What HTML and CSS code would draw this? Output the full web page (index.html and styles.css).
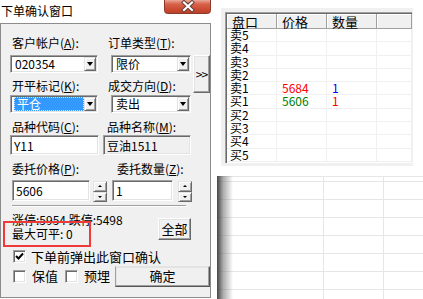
FILE: index.html
```html
<!DOCTYPE html>
<html lang="zh-CN">
<head>
  <meta charset="UTF-8">
  <title>下单确认窗口</title>
  <link rel="stylesheet" href="styles.css">
</head>
<body>

<div class="dialog">
  <div class="titlebar">
    <span class="title">下单确认窗口</span>
    <span class="close">
      <svg width="47" height="14" viewBox="0 0 47 14">
        <defs>
          <linearGradient id="cg" x1="0" y1="0" x2="0" y2="1">
            <stop offset="0" stop-color="#eaa898"/>
            <stop offset="0.3" stop-color="#d8624b"/>
            <stop offset="0.75" stop-color="#c9472f"/>
            <stop offset="1" stop-color="#b8412c"/>
          </linearGradient>
        </defs>
        <path d="M0.5 0 V10.5 Q0.5 13.5 3.5 13.5 H43.5 Q46.5 13.5 46.5 10.5 V0" fill="url(#cg)" stroke="#8b3a2c"/>
        <path d="M20 2.5 L28 10 M28 2.5 L20 10" stroke="#5a3a36" stroke-width="4" stroke-linecap="square"/>
        <path d="M20 2.5 L28 10 M28 2.5 L20 10" stroke="#fff" stroke-width="2.2" stroke-linecap="square"/>
      </svg>
    </span>
  </div>

  <div class="panel">
    <div class="top">
      <div class="top-grid">
        <label class="lbl">客户帐户(<u>A</u>):</label>
        <label class="lbl">订单类型(<u>T</u>):</label>
        <div class="combo"><span class="combo-text">020354</span><span class="drop"><i></i></span></div>
        <div class="combo combo-r"><span class="combo-text">限价</span><span class="drop"><i></i></span></div>
        <label class="lbl">开平标记(<u>K</u>):</label>
        <label class="lbl">成交方向(<u>D</u>):</label>
        <div class="combo"><span class="combo-text"><span class="sel">平仓</span></span><span class="drop"><i></i></span></div>
        <div class="combo combo-r"><span class="combo-text">卖出</span><span class="drop"><i></i></span></div>
      </div>
      <button class="btn more">&gt;&gt;</button>
    </div>

    <div class="row labels-3">
      <label class="lbl w93">品种代码(<u>C</u>):</label>
      <label class="lbl">品种名称(<u>M</u>):</label>
    </div>
    <div class="row inputs-3">
      <div class="edit w89">Y11</div>
      <div class="edit w88 readonly">豆油1511</div>
    </div>

    <div class="row labels-4">
      <label class="lbl w103">委托价格(<u>P</u>):</label>
      <label class="lbl">委托数量(<u>Z</u>):</label>
    </div>
    <div class="row inputs-4">
      <div class="edit price">5606</div>
      <div class="spin"><span class="up"><i></i></span><span class="down"><i></i></span></div>
      <div class="edit qty">1</div>
      <div class="spin"><span class="up"><i></i></span><span class="down"><i></i></span></div>
    </div>

    <div class="sep"></div>

    <div class="row info">
      <div class="limits">
        <div>涨停:5954 跌停:5498</div>
        <div>最大可平: 0</div>
      </div>
      <button class="btn all">全部</button>
    </div>

    <div class="row check-row">
      <span class="check checked">
        <svg width="9" height="9" viewBox="0 0 9 9"><path d="M1 4 L3.5 6.5 L8 1.5" fill="none" stroke="#000" stroke-width="2"/></svg>
      </span>
      <span class="check-text">下单前弹出此窗口确认</span>
    </div>

    <div class="row last-row">
      <span class="check"></span>
      <span class="check-text">保值</span>
      <span class="check check-2"></span>
      <span class="check-text">预埋</span>
      <button class="btn ok">确定</button>
    </div>
  </div>
</div>

<div class="mark"></div>

<div class="quote">
  <div class="list">
    <div class="list-head">
      <span>盘口</span><span>价格</span><span>数量</span><span></span>
    </div>
    <div class="list-row"><span>卖5</span><span></span><span></span><span></span></div>
    <div class="list-row"><span>卖4</span><span></span><span></span><span></span></div>
    <div class="list-row"><span>卖3</span><span></span><span></span><span></span></div>
    <div class="list-row"><span>卖2</span><span></span><span></span><span></span></div>
    <div class="list-row"><span>卖1</span><span class="red">5684</span><span class="blue">1</span><span></span></div>
    <div class="list-row"><span>买1</span><span class="green">5606</span><span class="red">1</span><span></span></div>
    <div class="list-row"><span>买2</span><span></span><span></span><span></span></div>
    <div class="list-row"><span>买3</span><span></span><span></span><span></span></div>
    <div class="list-row"><span>买4</span><span></span><span></span><span></span></div>
    <div class="list-row"><span>买5</span><span></span><span></span><span></span></div>
  </div>
</div>

<div class="sheet">
  <div class="cell first"></div><div class="cell first"></div><div class="cell first"></div>
  <div class="cell"></div><div class="cell"></div><div class="cell"></div>
  <div class="cell"></div><div class="cell"></div><div class="cell"></div>
  <div class="cell"></div><div class="cell"></div><div class="cell"></div>
  <div class="cell"></div><div class="cell"></div><div class="cell"></div>
  <div class="cell"></div><div class="cell"></div><div class="cell"></div>
  <div class="cell"></div><div class="cell"></div><div class="cell"></div>
  <div class="cell"></div><div class="cell"></div><div class="cell"></div>
</div>

</body>
</html>
```

FILE: styles.css
```css
* { margin: 0; padding: 0; box-sizing: border-box; }
body {
  width: 423px;
  height: 299px;
  overflow: hidden;
  position: relative;
  background: #fff;
  font-family: "Noto Sans CJK SC", sans-serif;
  font-size: 12px;
  line-height: 12px;
  color: #000;
}
u { text-decoration: underline; text-underline-offset: 1px; }
button { font: inherit; color: #000; }

/* dialog window */
.dialog {
  position: absolute;
  left: 0;
  top: 0;
  width: 211px;
}
.titlebar {
  height: 23px;
  display: flex;
  justify-content: space-between;
  align-items: flex-start;
  background: #fff;
}
.title {
  padding: 4px 0 0 1px;
  line-height: 13px;
  font-size: 12px;
}
.close { display: block; height: 14px; }
.close svg { display: block; }

.panel {
  height: 275px;
  background: #f0f0f0;
  border: 1px solid #8c8c8c;
  padding: 13px 0 0 9px;
}
.lbl { display: block; padding-left: 2px; white-space: nowrap; height: 12px; }
.w93 { width: 95px; }
.w103 { width: 105px; }

.top { display: flex; }
.top-grid {
  display: grid;
  grid-template-columns: 98px 85px;
  grid-template-rows: 18px 25px 15px 18px;
}
.top-grid .lbl:nth-child(2n) { margin-left: -2px; }
.more {
  width: 17px;
  height: 38px;
  margin-top: 18px;
  font-size: 12px;
  letter-spacing: -1px;
}

/* sunken controls */
.combo, .edit, .check {
  background: #fff;
  border: 1px solid;
  border-color: #a0a0a0 #fff #fff #a0a0a0;
  box-shadow: inset 1px 1px 0 #696969, inset -1px -1px 0 #e3e3e3;
}
.combo {
  width: 88px;
  height: 18px;
  display: flex;
  padding: 1px;
}
.combo-r { width: 80px; margin-left: 3px; }
.combo-text {
  flex: 1;
  padding-left: 3px;
  line-height: 14px;
  white-space: nowrap;
}
.sel {
  display: block;
  width: 70px;
  height: 14px;
  margin-left: -1px;
  padding-left: 3px;
  background: #3399ff;
  color: #fff;
  outline: 1px dotted #cfe4ff;
  outline-offset: -1px;
}
.drop {
  width: 12px;
  height: 14px;
  background: #f0f0f0;
  border: 1px solid;
  border-color: #e3e3e3 #696969 #696969 #e3e3e3;
  box-shadow: inset 1px 1px 0 #fff, inset -1px -1px 0 #a0a0a0;
  display: flex;
  align-items: center;
  justify-content: center;
}
.drop i {
  display: block;
  width: 0;
  height: 0;
  border-left: 3.5px solid transparent;
  border-right: 3.5px solid transparent;
  border-top: 4px solid #000;
}

.row { display: flex; }
.labels-3 { margin-top: 8px; }
.inputs-3 { margin-top: 2px; }
.edit {
  height: 20px;
  padding: 3px 0 0 3px;
  line-height: 14px;
  white-space: nowrap;
}
.w89 { width: 89px; }
.w88 { width: 88px; margin-left: 4px; }
.readonly { background: #f0f0f0; }

.labels-4 { margin-top: 8px; }
.inputs-4 { margin-top: 5px; }
.price { width: 78px; height: 21px; margin-left: 2px; }
.qty { width: 61px; height: 21px; margin-left: 5px; }
.spin {
  width: 14px;
  height: 21px;
  margin: 1px 0 0 3px;
  display: flex;
  flex-direction: column;
}
.inputs-4 .spin:last-child { margin-left: 5px; }
.spin span {
  flex: 1;
  background: #f0f0f0;
  border: 1px solid;
  border-color: #e3e3e3 #696969 #696969 #e3e3e3;
  box-shadow: inset 1px 1px 0 #fff, inset -1px -1px 0 #a0a0a0;
  display: flex;
  align-items: center;
  justify-content: center;
}
.spin i {
  display: block;
  width: 0;
  height: 0;
  border-left: 2px solid transparent;
  border-right: 2px solid transparent;
}
.spin .up i { border-bottom: 2px solid #000; }
.spin .down i { border-top: 2px solid #000; }

.sep {
  width: 174px;
  height: 2px;
  margin: 3px 0 0 2px;
  border-top: 1px solid #a0a0a0;
  border-bottom: 1px solid #fff;
}

.info { margin-top: 6px; height: 27px; }
.limits {
  width: 148px;
  padding-left: 2px;
  line-height: 14px;
  white-space: nowrap;
}
.btn {
  background: #f0f0f0;
  border: 1px solid;
  border-color: #fff #696969 #696969 #fff;
  box-shadow: inset -1px -1px 0 #a0a0a0, inset 1px 1px 0 #e3e3e3;
  line-height: 12px;
  padding: 0;
}
.all {
  width: 33px;
  height: 22px;
  margin-top: 5px;
  font-size: 13px;
}

.check-row { margin-top: 10px; align-items: center; height: 13px; }
.check {
  width: 13px;
  height: 13px;
  margin-left: 3px;
  display: flex;
  align-items: center;
  justify-content: center;
}
.check-text {
  margin-left: 5px;
  font-size: 13px;
  white-space: nowrap;
}
.last-row { margin-top: 2px; align-items: center; height: 22px; }
.last-row .check-text { margin-left: 6px; }
.check-2 { margin-left: 7px; }
.ok {
  width: 95px;
  height: 21px;
  margin-left: 5px;
  font-size: 13px;
  border-color: #e3e3e3 #555 #555 #a0a0a0;
}

/* annotation box */
.mark {
  position: absolute;
  left: 3px;
  top: 221px;
  width: 88px;
  height: 26px;
  border: 2px solid #f03a3a;
}

/* quote window */
.quote {
  position: absolute;
  left: 221px;
  top: 8px;
  width: 192px;
  height: 158px;
  background: #f0f0f0;
  padding: 4px 1px 0 4px;
}
.list {
  height: 151px;
  background: #fff;
  border-top: 1px solid #a0a0a0;
  border-left: 1px solid #a0a0a0;
  box-shadow: inset 1px 1px 0 #696969;
  padding: 1px 0 0 1px;
}
.list-head, .list-row {
  display: grid;
  grid-template-columns: 50px 50px 50px 1fr;
}
.list-head span {
  height: 15px;
  background: #f0f0f0;
  border-right: 1px solid #a0a0a0;
  border-bottom: 1px solid #a0a0a0;
  box-shadow: inset 1px 1px 0 #fff;
  padding: 2px 0 0 5px;
  font-size: 13px;
  line-height: 12px;
}
.list-row span {
  height: 13.3px;
  border-right: 1px solid #f0f0f0;
  border-bottom: 1px solid #f0f0f0;
  padding-left: 3px;
  line-height: 12px;
  font-size: 12px;
}
.list-row span:nth-child(n+2) { padding-left: 5px; }
.red { color: #ff0000; }
.green { color: #008000; }
.blue { color: #0000ff; }

/* spreadsheet behind */
.sheet {
  position: absolute;
  left: 217px;
  top: 176px;
  right: 0;
  bottom: 0;
  display: grid;
  grid-template-columns: 107px 60px 60px;
  grid-template-rows: 5px;
  grid-auto-rows: 18px;
  border-top: 1px solid #e6e6e6;
}
.sheet::before {
  content: "";
  position: absolute;
  left: 0;
  top: -1px;
  bottom: 0;
  width: 16px;
  background: linear-gradient(to right, rgba(60,60,60,0.95), rgba(120,120,120,0.6) 40%, rgba(255,255,255,0));
}
.cell {
  border-right: 1px solid #e6e6e6;
  border-bottom: 1px solid #e6e6e6;
}
```
